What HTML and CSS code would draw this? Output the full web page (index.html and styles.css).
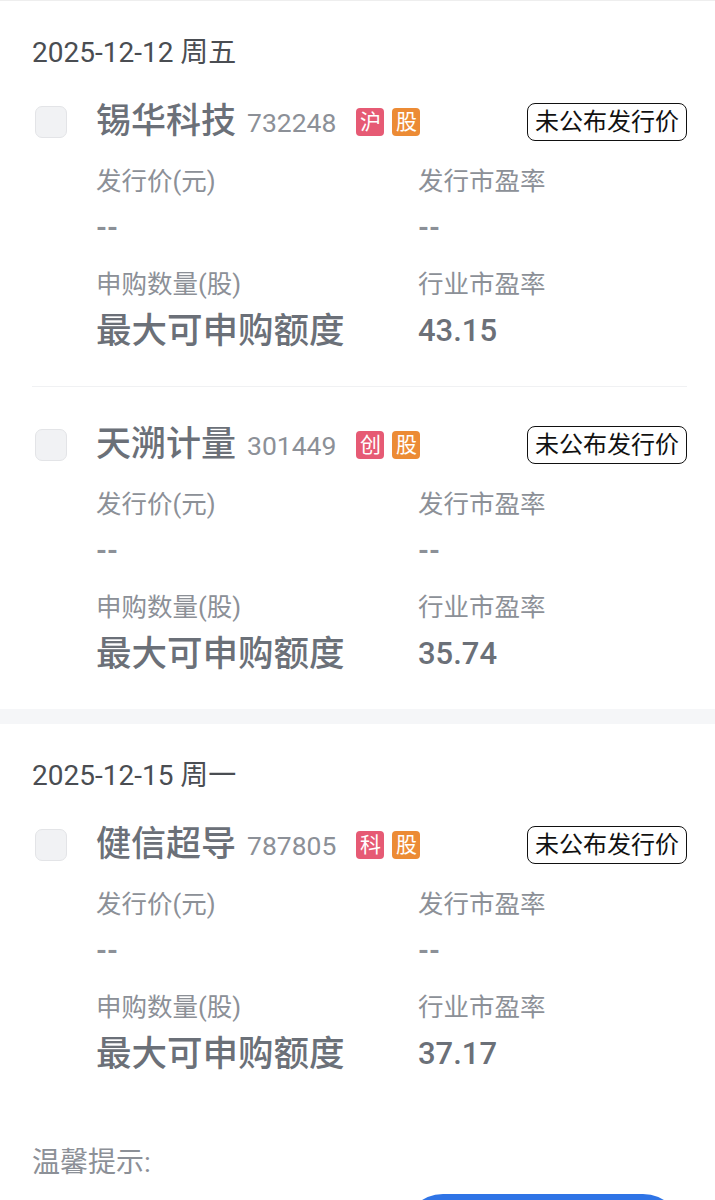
FILE: index.html
```html
<!DOCTYPE html>
<html lang="zh-CN">
<head>
  <meta charset="UTF-8">
  <meta name="viewport" content="width=device-width, initial-scale=1.0">
  <title>新股申购</title>
  <link rel="stylesheet" href="styles.css">
</head>
<body>
  <div class="page">
    <div class="section">
      <div class="date">2025-12-12 周五</div>

      <div class="stock">
        <div class="stock-head">
          <span class="check"></span>
          <span class="name">锡华科技</span>
          <span class="code">732248</span>
          <span class="tags">
            <span class="tag tag-red">沪</span>
            <span class="tag tag-orange">股</span>
          </span>
          <span class="price-btn">未公布发行价</span>
        </div>
        <div class="info">
          <div class="cell">
            <div class="label">发行价(元)</div>
            <div class="value">--</div>
          </div>
          <div class="cell">
            <div class="label">发行市盈率</div>
            <div class="value">--</div>
          </div>
          <div class="cell">
            <div class="label">申购数量(股)</div>
            <div class="value strong cjk">最大可申购额度</div>
          </div>
          <div class="cell">
            <div class="label">行业市盈率</div>
            <div class="value strong">43.15</div>
          </div>
        </div>
      </div>

      <div class="stock">
        <div class="stock-head">
          <span class="check"></span>
          <span class="name">天溯计量</span>
          <span class="code">301449</span>
          <span class="tags">
            <span class="tag tag-red">创</span>
            <span class="tag tag-orange">股</span>
          </span>
          <span class="price-btn">未公布发行价</span>
        </div>
        <div class="info">
          <div class="cell">
            <div class="label">发行价(元)</div>
            <div class="value">--</div>
          </div>
          <div class="cell">
            <div class="label">发行市盈率</div>
            <div class="value">--</div>
          </div>
          <div class="cell">
            <div class="label">申购数量(股)</div>
            <div class="value strong cjk">最大可申购额度</div>
          </div>
          <div class="cell">
            <div class="label">行业市盈率</div>
            <div class="value strong">35.74</div>
          </div>
        </div>
      </div>
    </div>

    <div class="section">
      <div class="date">2025-12-15 周一</div>

      <div class="stock">
        <div class="stock-head">
          <span class="check"></span>
          <span class="name">健信超导</span>
          <span class="code">787805</span>
          <span class="tags">
            <span class="tag tag-red">科</span>
            <span class="tag tag-orange">股</span>
          </span>
          <span class="price-btn">未公布发行价</span>
        </div>
        <div class="info">
          <div class="cell">
            <div class="label">发行价(元)</div>
            <div class="value">--</div>
          </div>
          <div class="cell">
            <div class="label">发行市盈率</div>
            <div class="value">--</div>
          </div>
          <div class="cell">
            <div class="label">申购数量(股)</div>
            <div class="value strong cjk">最大可申购额度</div>
          </div>
          <div class="cell">
            <div class="label">行业市盈率</div>
            <div class="value strong">37.17</div>
          </div>
        </div>
      </div>

      <div class="tips">温馨提示:</div>
      <div class="submit-row">
        <span class="submit-btn"></span>
      </div>
    </div>
  </div>
</body>
</html>
```

FILE: styles.css
```css
:root {
  --text: #4a4d52;
  --muted: #8c9097;
  --name: #6b7078;
  --line: #f0f1f3;
  --band: #f5f6f8;
  --red: #e65a74;
  --orange: #ec8b35;
  --blue: #2f74e6;
}

body {
  margin: 0;
  font-family: Roboto, "Noto Sans CJK SC", sans-serif;
  background: #ffffff;
  color: var(--text);
}

.page {
  border-top: 1px solid #eeeeee;
}

.section {
  background: #ffffff;
  padding: 41px 28px 0 32px;
}

.section + .section {
  border-top: 15px solid var(--band);
}

.date {
  font-size: 28px;
  line-height: 22px;
  color: var(--text);
}

.stock {
  padding: 38px 0 25px;
}

.stock + .stock {
  border-top: 1px solid var(--line);
}

.stock-head {
  display: flex;
  align-items: center;
  height: 40px;
}

.check {
  width: 30px;
  height: 30px;
  margin-left: 3px;
  margin-right: 29px;
  border: 1px solid #e3e4e7;
  border-radius: 7px;
  background: #f1f2f4;
}

.name {
  font-size: 35px;
  font-weight: 500;
  color: var(--name);
  line-height: 40px;
}

.code {
  margin-left: 11px;
  font-size: 26.5px;
  color: var(--muted);
}

.tags {
  display: flex;
  gap: 8px;
  margin-left: 20px;
}

.tag {
  width: 28px;
  height: 28px;
  border-radius: 4px;
  color: #ffffff;
  font-size: 21px;
  line-height: 28px;
  text-align: center;
}

.tag-red {
  background: var(--red);
}

.tag-orange {
  background: var(--orange);
}

.price-btn {
  margin-left: auto;
  padding: 0 7px;
  height: 36px;
  border: 1.5px solid #111111;
  border-radius: 8px;
  font-size: 24px;
  line-height: 36px;
  color: #111111;
}

.info {
  display: grid;
  grid-template-columns: 322px 1fr;
  row-gap: 9px;
  margin-left: 64px;
  margin-top: 22px;
}

.label {
  font-size: 25.5px;
  line-height: 34px;
  color: var(--muted);
}

.value {
  font-size: 28px;
  font-weight: 700;
  line-height: 60px;
  color: var(--muted);
}

.value.strong {
  font-size: 31px;
  font-weight: 500;
  color: var(--name);
}

.value.cjk {
  font-size: 35.5px;
}

.tips {
  margin-top: 37px;
  font-size: 28px;
  line-height: 34px;
  color: var(--muted);
}

.submit-row {
  display: flex;
  justify-content: flex-end;
  margin-top: 14px;
  padding-right: 4px;
}

.submit-btn {
  width: 280px;
  height: 80px;
  border-radius: 40px;
  background: var(--blue);
}
```
